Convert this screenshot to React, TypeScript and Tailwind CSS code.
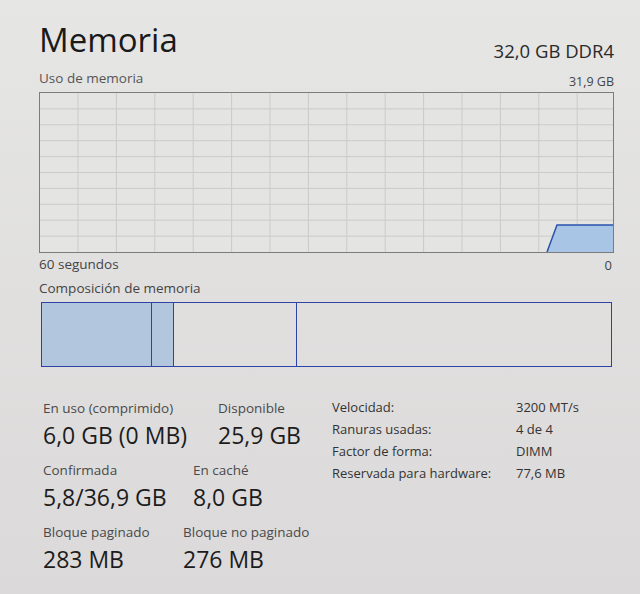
import React from "react";

const font = { fontFamily: '"Open Sans", "Noto Sans", sans-serif' };

function UsageGraph() {
  const w = 573;
  const h = 159;
  const cols: number[] = [];
  for (let x = 38; x < w; x += 38.4) cols.push(x);
  const rows: number[] = [];
  for (let k = 1; k < 10; k++) rows.push(k * 15.9);

  return (
    <div className="h-[161px] w-[575px] border border-[#7c7c7c] bg-[#e4e4e3]">
      <svg width={w} height={h} className="block">
        {cols.map((x) => (
          <line key={"c" + x} x1={x} y1={0} x2={x} y2={h} stroke="#cbcbcb" strokeWidth={1} />
        ))}
        {rows.map((y) => (
          <line key={"r" + y} x1={0} y1={y} x2={w} y2={y} stroke="#cbcbcb" strokeWidth={1} />
        ))}
        <polygon points={`507,${h} 517,132 ${w},132 ${w},${h}`} fill="#a9c5e6" />
        <polyline points={`507,${h} 517,132 ${w},132`} fill="none" stroke="#2a52ad" strokeWidth={1.5} />
      </svg>
    </div>
  );
}

function Composition() {
  return (
    <div className="ml-[2px] flex h-[65px] w-[571px] border border-[#2f42a6]">
      <div className="w-[110px] border-r border-[#2f42a6] bg-[#b2c6de]" />
      <div className="w-[22px] border-r border-[#2f42a6] bg-[#b2c6de]" />
      <div className="w-[123px] border-r border-[#2f42a6]" />
      <div className="flex-1" />
    </div>
  );
}

function Stat({ label, value, width }: { label: string; value: string; width: string }) {
  return (
    <div className={width}>
      <div className="text-[13.5px] leading-[18px] text-[#4a4a4a]">{label}</div>
      <div className="text-[23px] leading-[36px] text-[#1c1c1c]">{value}</div>
    </div>
  );
}

export default function App() {
  const specs = [
    ["Velocidad:", "3200 MT/s"],
    ["Ranuras usadas:", "4 de 4"],
    ["Factor de forma:", "DIMM"],
    ["Reservada para hardware:", "77,6 MB"],
  ];

  return (
    <div
      className="h-[594px] w-[640px] overflow-hidden bg-linear-to-b from-[#e6e6e5] to-[#dbd9d9] pl-[39px]"
      style={font}
    >
      <div className="flex h-[71px] w-[575px] items-start justify-between">
        <div className="pt-[23px] text-[33px] leading-[33px] text-[#1a1a1a]">Memoria</div>
        <div className="pt-[41px] text-[18.5px] leading-[19px] text-[#2a2a2a]">32,0 GB DDR4</div>
      </div>
      <div className="flex h-[21px] w-[575px] items-start justify-between">
        <div className="pt-[1px] text-[13.5px] leading-[13px] text-[#555]">Uso de memoria</div>
        <div className="pt-[4px] text-[12.5px] leading-[13px] text-[#444]">31,9 GB</div>
      </div>
      <UsageGraph />
      <div className="flex h-[24px] w-[575px] items-start justify-between">
        <div className="pt-[5px] text-[13.5px] leading-[13px] text-[#444]">60 segundos</div>
        <div className="pr-[2px] pt-[6px] text-[13px] leading-[13px] text-[#444]">0</div>
      </div>
      <div className="h-[25px] pt-[5px] text-[13.5px] leading-[13px] text-[#444]">Composición de memoria</div>
      <Composition />
      <div className="flex">
        <div className="flex w-[293px] flex-col gap-[8px] pl-[4px] pt-[32px]">
          <div className="flex">
            <Stat label="En uso (comprimido)" value="6,0 GB (0 MB)" width="w-[175px]" />
            <Stat label="Disponible" value="25,9 GB" width="w-[110px]" />
          </div>
          <div className="flex">
            <Stat label="Confirmada" value="5,8/36,9 GB" width="w-[150px]" />
            <Stat label="En caché" value="8,0 GB" width="w-[110px]" />
          </div>
          <div className="flex">
            <Stat label="Bloque paginado" value="283 MB" width="w-[140px]" />
            <Stat label="Bloque no paginado" value="276 MB" width="w-[140px]" />
          </div>
        </div>
        <div className="pt-[29px] text-[13px] leading-[22px] text-[#333]">
          {specs.map(([k, v]) => (
            <div key={k} className="flex">
              <div className="w-[184px]">{k}</div>
              <div>{v}</div>
            </div>
          ))}
        </div>
      </div>
    </div>
  );
}
